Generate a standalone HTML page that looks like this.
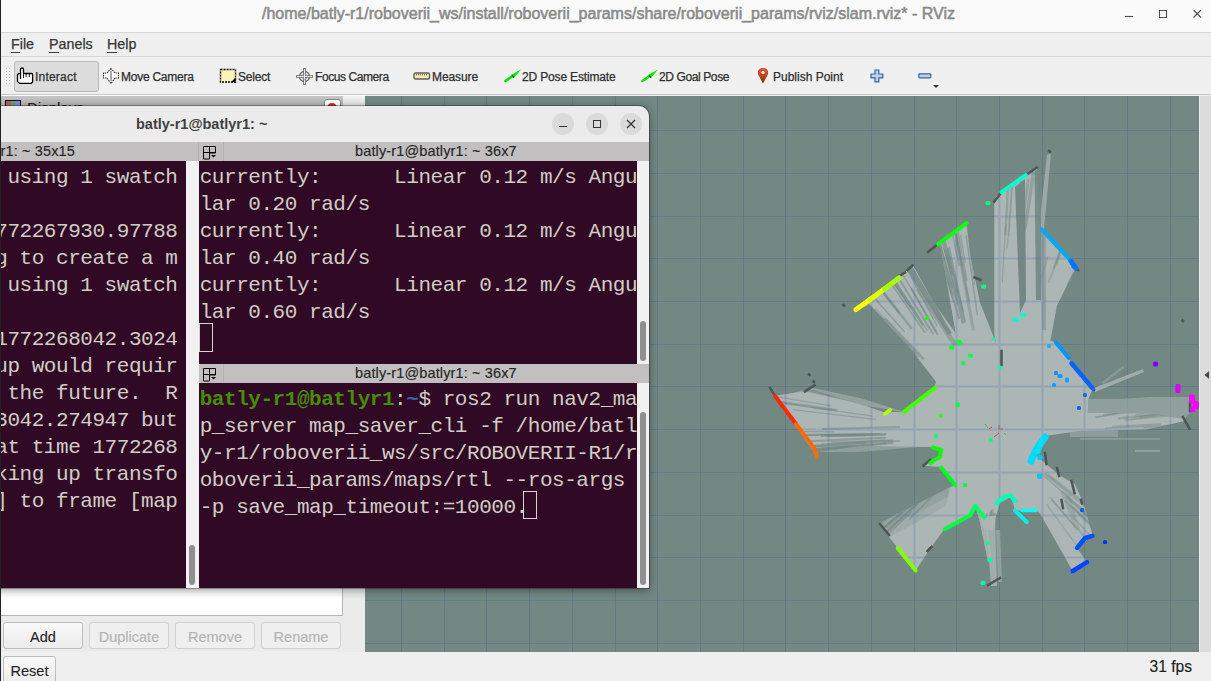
<!DOCTYPE html>
<html><head><meta charset="utf-8">
<style>
*{margin:0;padding:0;box-sizing:border-box}
html,body{width:1211px;height:681px;overflow:hidden;background:#efefef;font-family:"Liberation Sans",sans-serif}
.a{position:absolute}
#titlebar{left:0;top:0;width:1211px;height:33px;background:#fafafa;border-bottom:1px solid #d6d6d6}
#title{left:262px;top:5px;font-size:16px;color:#8a8a8a;white-space:nowrap;-webkit-text-stroke:0.55px #8a8a8a}
#menubar{left:0;top:33px;width:1211px;height:24px;background:#efefef;border-bottom:1px solid #d8d8d8}
.menu{top:36px;font-size:14.3px;color:#353535;-webkit-text-stroke:0.25px #353535}
.menu u{text-decoration:none;border-bottom:1px solid #3c3c3c}
#toolbar{left:0;top:57px;width:1211px;height:38px;background:#f0f0f0;border-bottom:1px solid #c9c9c9}
.tb{top:70px;font-size:12px;color:#2e2e2e;white-space:nowrap;-webkit-text-stroke:0.25px #2e2e2e}
#view{left:365px;top:96px;width:834px;height:557px;background:#738883;overflow:hidden}
#rpanel{left:1199px;top:96px;width:12px;height:557px;background:#dcdcdc}
#status{left:0;top:652px;width:1211px;height:29px;background:#efefef}
.btn{height:27px;border:1px solid #bdbdbd;border-radius:3px;background:linear-gradient(#f8f8f8,#ececec);font-size:14.5px;text-align:center;line-height:28px;color:#222;-webkit-text-stroke:0.1px #222}
.btn.dis{color:#b5b5b5;border-color:#d0d0d0;background:#efefef;-webkit-text-stroke:0.2px #b5b5b5}
#term{left:-260px;top:106px;width:909px;height:482px;background:#ebebeb;border-radius:0 10px 0 0;box-shadow:0 0 0 1px rgba(0,0,0,.28),0 2px 10px rgba(0,0,0,.42);overflow:hidden}
.tt{font-family:"Liberation Mono",monospace;font-size:21px;letter-spacing:-0.452px;color:#d0ccc6;white-space:pre;line-height:27px}
.tabbar{background:#c1bfbf;height:19px}
.tabt{font-size:14.5px;letter-spacing:0.13px;color:#262626;white-space:nowrap;-webkit-text-stroke:0.15px #262626}
.pane{background:#300a24}
.sbt{background:#f1f1f1}
.thumb{background:#8f8f8f;border-radius:3px;width:6px}
.g{color:#488c05;font-weight:bold}
.bl{color:#3465a4;font-weight:bold}
</style></head><body>
<div class="a" id="titlebar"></div>
<div class="a" id="title">/home/batly-r1/roboverii_ws/install/roboverii_params/share/roboverii_params/rviz/slam.rviz* - RViz</div>

<svg class="a" style="left:1120px;top:5px" width="90" height="20"><path d="M5 11.5H13" stroke="#505050" stroke-width="1.1"/><path d="M39.5 5.5H46.5V12.5H39.5Z" fill="none" stroke="#505050" stroke-width="1.1"/><path d="M73.5 5L81 12.5M81 5L73.5 12.5" stroke="#505050" stroke-width="1.1"/></svg>
<div class="a" id="menubar"></div>
<div class="a menu" style="left:11px"><u>F</u>ile</div>
<div class="a menu" style="left:49px"><u>P</u>anels</div>
<div class="a menu" style="left:107px"><u>H</u>elp</div>

<div class="a" id="toolbar"></div>
<div class="a" style="left:14px;top:61px;width:85px;height:31px;background:#dcdcdc;border:1px solid #b9b9b9;border-radius:3px"></div>
<div class="a tb" style="left:35px;letter-spacing:0.21px">Interact</div>
<div class="a tb" style="left:121px;letter-spacing:-0.25px">Move Camera</div>
<div class="a tb" style="left:238px;letter-spacing:-0.19px">Select</div>
<div class="a tb" style="left:315px;letter-spacing:-0.42px">Focus Camera</div>
<div class="a tb" style="left:432px;letter-spacing:-0.1px">Measure</div>
<div class="a tb" style="left:522px;letter-spacing:-0.16px">2D Pose Estimate</div>
<div class="a tb" style="left:659px;letter-spacing:-0.39px">2D Goal Pose</div>
<div class="a tb" style="left:773px">Publish Point</div>
<svg class="a" style="left:5px;top:67px" width="6" height="18"><g fill="#c4c4c4"><rect x="1" y="1" width="1" height="1"/><rect x="4" y="1" width="1" height="1"/><rect x="1" y="4" width="1" height="1"/><rect x="4" y="4" width="1" height="1"/><rect x="1" y="7" width="1" height="1"/><rect x="4" y="7" width="1" height="1"/><rect x="1" y="10" width="1" height="1"/><rect x="4" y="10" width="1" height="1"/><rect x="1" y="13" width="1" height="1"/><rect x="4" y="13" width="1" height="1"/><rect x="1" y="16" width="1" height="1"/><rect x="4" y="16" width="1" height="1"/></g></svg>
<svg class="a" style="left:16px;top:67px" width="18" height="18"><path d="M4.5 12V2.6Q4.5 1 6 1Q7.5 1 7.5 2.6V6.5H15.5Q16.6 6.5 16.6 7.6V14.8L15.4 16.4H3.6L1.5 14.4V7.8L2.6 6.6H4.5" fill="#fff" stroke="#000" stroke-width="1.3" stroke-linejoin="round"/><path d="M10.2 6.6V10M13.3 6.6V10M7.5 7V11" stroke="#000" stroke-width="0.9"/></svg>
<svg class="a" style="left:102px;top:67px" width="18" height="18"><path d="M9 1.5L5 6H1.5V11H5L9 16.5L13 11H16.5V6H13Z" fill="#fff" stroke="#333" stroke-width="1.1" stroke-dasharray="1.5 0.8"/><path d="M9 4V14" stroke="#aaa" stroke-width="2"/></svg>
<svg class="a" style="left:219px;top:68px" width="18" height="16"><rect x="1.5" y="1.5" width="15" height="12.5" fill="#fdf5b8" stroke="#000" stroke-width="1.4" stroke-dasharray="2 1"/><path d="M16.5 9.5V14.2H12Z" fill="#000"/></svg>
<svg class="a" style="left:295px;top:67px" width="19" height="19"><circle cx="9.5" cy="9.5" r="5" fill="#fff" stroke="#6a6a6a" stroke-width="1.3"/><path d="M9.5 1V18M1 9.5H18" stroke="#6a6a6a" stroke-width="2.6"/><path d="M9.5 1.8V17.2M1.8 9.5H17.2" stroke="#fff" stroke-width="0.9"/><circle cx="9.5" cy="9.5" r="3" fill="none" stroke="#777" stroke-width="0.8" stroke-dasharray="1 1"/></svg>
<svg class="a" style="left:413px;top:72px" width="18" height="8"><rect x="1" y="1" width="15.5" height="6" rx="1.5" fill="#f5e9ad" stroke="#606060" stroke-width="1.4"/><path d="M3.5 1.5V3.5M5.5 1.5V3.5M7.5 1.5V3.5M9.5 1.5V3.5M11.5 1.5V3.5M13.5 1.5V3.5" stroke="#707050" stroke-width="0.9"/></svg>
<svg class="a" style="left:504px;top:68px" width="18" height="15"><path d="M1.5 13L8.5 8" stroke="#00e000" stroke-width="2.6" stroke-linecap="round"/><path d="M17 1.5L7 7L10 10Z" fill="#00f000"/><path d="M8 7.5L10 9.5" stroke="#006000" stroke-width="1.2"/></svg>
<svg class="a" style="left:641px;top:68px" width="18" height="15"><path d="M1.5 13L8.5 8" stroke="#00e000" stroke-width="2.6" stroke-linecap="round"/><path d="M17 1.5L7 7L10 10Z" fill="#00f000"/><path d="M8 7.5L10 9.5" stroke="#006000" stroke-width="1.2"/></svg>
<svg class="a" style="left:757px;top:67px" width="12" height="17"><defs><linearGradient id="pin" x1="0" y1="0" x2="0" y2="1"><stop offset="0" stop-color="#e54b2c"/><stop offset="0.55" stop-color="#b8461c"/><stop offset="1" stop-color="#5a3208"/></linearGradient></defs><path d="M6 16.5L1.6 8.5Q0.8 7 0.8 5.8Q0.8 1 6 1Q11.2 1 11.2 5.8Q11.2 7 10.4 8.5Z" fill="url(#pin)"/><circle cx="6" cy="5.5" r="1.7" fill="#fff"/></svg>
<svg class="a" style="left:870px;top:69px" width="14" height="14"><path d="M5 1H8.8V5H12.8V8.8H8.8V12.8H5V8.8H1V5H5Z" fill="#bcd0ea" stroke="#3763a8" stroke-width="1.2"/></svg>
<svg class="a" style="left:918px;top:73px" width="14" height="6"><rect x="0.8" y="0.8" width="12" height="4" rx="0.8" fill="#bcd0ea" stroke="#3763a8" stroke-width="1.2"/></svg>
<svg class="a" style="left:932px;top:84px" width="8" height="5"><path d="M1 1H7L4 4Z" fill="#333"/></svg>

<div class="a" id="view"><svg width="834" height="557" style="position:absolute;left:0;top:0">
<defs><clipPath id="oc"><polygon points="629.2,105.7 630.7,100.5 636.6,96.1 660.8,79.2 671.8,71.5 675.0,133.0 676.6,133.4 706.0,165.0 710.7,172.1 691.9,209.7 685.4,244.8 690.7,246.1 703.9,262.0 706.5,267.3 727.7,292.4 723.0,304.0 722.8,317.0 781.0,317.0 820.0,323.0 818.0,325.4 781.0,333.5 715.8,334.7 680.1,340.0 671.0,359.0 681.3,368.2 694.5,379.2 709.9,388.0 718.7,407.9 727.5,438.7 712.1,451.9 722.0,466.2 707.7,475.0 674.6,416.7 671.0,414.5 650.0,414.5 648.0,407.0 645.4,401.0 635.0,407.0 631.3,419.2 613.7,421.5 610.1,409.8 605.4,419.2 579.6,433.3 578.4,434.5 565.5,452.1 550.7,474.4 532.6,452.1 513.8,427.4 585.5,391.0 590.2,388.6 574.9,371.0 558.4,369.8 564.3,366.3 572.5,362.8 577.2,355.7 566.7,351.0 495.0,349.9 453.0,355.3 452.3,361.5 410.0,299.8 448.0,294.0 501.0,310.0 518.0,316.0 540.0,316.0 569.4,291.9 571.0,285.7 546.5,254.0 504.8,208.7 490.5,214.2 494.9,210.9 534.6,181.2 537.9,177.9 547.8,169.0 568.7,206.5 590.7,237.3 581.9,186.7 575.3,149.2 573.1,148.1 601.7,127.2 605.0,158.0 615.0,206.5 631.0,247.0 629.3,239.0"/></clipPath></defs>
<path d="M36.5 0V557 M79.5 0V557 M121.5 0V557 M164.5 0V557 M207.5 0V557 M250.5 0V557 M292.5 0V557 M335.5 0V557 M378.5 0V557 M420.5 0V557 M463.5 0V557 M506.5 0V557 M549.5 0V557 M591.5 0V557 M634.5 0V557 M677.5 0V557 M719.5 0V557 M762.5 0V557 M805.5 0V557 M0 547.5H834 M0 504.5H834 M0 461.5H834 M0 419.5H834 M0 376.5H834 M0 333.5H834 M0 290.5H834 M0 248.5H834 M0 205.5H834 M0 162.5H834 M0 120.5H834 M0 77.5H834 M0 34.5H834" stroke="rgb(60,90,140)" stroke-opacity="0.27" stroke-width="1" fill="none"/>
<polygon points="629.2,105.7 630.7,100.5 636.6,96.1 660.8,79.2 671.8,71.5 675.0,133.0 676.6,133.4 706.0,165.0 710.7,172.1 691.9,209.7 685.4,244.8 690.7,246.1 703.9,262.0 706.5,267.3 727.7,292.4 723.0,304.0 722.8,317.0 781.0,317.0 820.0,323.0 818.0,325.4 781.0,333.5 715.8,334.7 680.1,340.0 671.0,359.0 681.3,368.2 694.5,379.2 709.9,388.0 718.7,407.9 727.5,438.7 712.1,451.9 722.0,466.2 707.7,475.0 674.6,416.7 671.0,414.5 650.0,414.5 648.0,407.0 645.4,401.0 635.0,407.0 631.3,419.2 613.7,421.5 610.1,409.8 605.4,419.2 579.6,433.3 578.4,434.5 565.5,452.1 550.7,474.4 532.6,452.1 513.8,427.4 585.5,391.0 590.2,388.6 574.9,371.0 558.4,369.8 564.3,366.3 572.5,362.8 577.2,355.7 566.7,351.0 495.0,349.9 453.0,355.3 452.3,361.5 410.0,299.8 448.0,294.0 501.0,310.0 518.0,316.0 540.0,316.0 569.4,291.9 571.0,285.7 546.5,254.0 504.8,208.7 490.5,214.2 494.9,210.9 534.6,181.2 537.9,177.9 547.8,169.0 568.7,206.5 590.7,237.3 581.9,186.7 575.3,149.2 573.1,148.1 601.7,127.2 605.0,158.0 615.0,206.5 631.0,247.0 629.3,239.0" fill="#acb6b4"/>
<polygon points="415.0,300.0 448.0,292.0 495.0,302.0 540.0,316.0 501.0,310.0 448.0,296.0" fill="#acb6b4" fill-opacity="0.55"/>
<polygon points="674.0,133.0 682.0,59.0 686.0,57.0 679.0,133.0" fill="#acb6b4" fill-opacity="0.7"/>
<polygon points="721.0,303.0 755.0,303.0 785.0,301.0 825.0,301.0 825.0,316.0 820.0,323.0 781.0,317.0 722.8,317.0" fill="#acb6b4" fill-opacity="0.5"/>
<polygon points="729.0,292.0 778.0,273.0 779.0,276.0 730.0,296.0" fill="#acb6b4" fill-opacity="0.8"/>
<polygon points="737.0,286.0 758.0,270.0 759.0,272.0 738.0,288.0" fill="#acb6b4" fill-opacity="0.4"/>
<polygon points="705.0,334.0 753.0,334.0 753.0,341.0 705.0,341.0" fill="#acb6b4" fill-opacity="0.45"/>
<polygon points="715.0,342.0 795.0,342.0 795.0,344.0 715.0,344.0" fill="#acb6b4" fill-opacity="0.35"/>
<polygon points="770.0,354.0 795.0,354.0 795.0,356.0 770.0,356.0" fill="#acb6b4" fill-opacity="0.5"/>
<polygon points="453.0,356.0 495.0,350.0 565.0,350.0 495.0,356.0" fill="#acb6b4" fill-opacity="0.5"/>
<polygon points="613.7,421.0 621.0,421.0 627.0,466.0 623.0,466.0" fill="#acb6b4" fill-opacity="0.85"/>
<polygon points="621.0,424.0 630.0,420.0 632.0,490.0 626.0,490.0" fill="#acb6b4" fill-opacity="0.8"/>
<polygon points="631.0,434.0 635.0,434.0 637.0,486.0 633.0,486.0" fill="#acb6b4" fill-opacity="0.55"/>
<polygon points="615.0,421.0 631.0,419.0 629.0,434.0 619.0,434.0" fill="#acb6b4" fill-opacity="1.0"/>
<polygon points="585.0,391.0 513.8,427.4 520.0,430.0 583.0,399.0" fill="#acb6b4" fill-opacity="0.3"/>
<g stroke="#738883" clip-path="url(#oc)"><line x1="546.8" y1="232.7" x2="483.7" y2="152.6" stroke-width="2.4" stroke-opacity="0.55"/><line x1="534.4" y1="217.1" x2="508.7" y2="184.4" stroke-width="2.4" stroke-opacity="0.55"/><line x1="546.8" y1="213.3" x2="525.6" y2="181.6" stroke-width="2" stroke-opacity="0.55"/><line x1="534.0" y1="246.3" x2="460.9" y2="176.5" stroke-width="1.2" stroke-opacity="0.55"/><line x1="560.0" y1="236.7" x2="516.2" y2="173.0" stroke-width="1.6" stroke-opacity="0.55"/><line x1="544.9" y1="211.4" x2="525.4" y2="182.2" stroke-width="1.2" stroke-opacity="0.55"/><line x1="550.2" y1="258.4" x2="514.9" y2="223.1" stroke-width="2.4" stroke-opacity="0.55"/><line x1="539.6" y1="236.0" x2="505.7" y2="197.7" stroke-width="1.6" stroke-opacity="0.55"/><line x1="558.2" y1="229.5" x2="510.2" y2="156.5" stroke-width="2.4" stroke-opacity="0.55"/><line x1="562.3" y1="234.3" x2="516.6" y2="163.7" stroke-width="1.2" stroke-opacity="0.55"/><line x1="568.1" y1="238.0" x2="534.8" y2="183.9" stroke-width="2" stroke-opacity="0.55"/><line x1="528.3" y1="250.1" x2="493.3" y2="220.0" stroke-width="1.2" stroke-opacity="0.55"/><line x1="572.2" y1="230.1" x2="517.9" y2="127.9" stroke-width="1.2" stroke-opacity="0.55"/><line x1="518.7" y1="224.5" x2="496.4" y2="201.8" stroke-width="2.4" stroke-opacity="0.55"/><line x1="578.5" y1="226.2" x2="558.2" y2="181.8" stroke-width="1.6" stroke-opacity="0.55"/><line x1="572.8" y1="238.7" x2="546.2" y2="192.1" stroke-width="2" stroke-opacity="0.55"/><line x1="535.6" y1="257.5" x2="450.6" y2="185.2" stroke-width="1.6" stroke-opacity="0.55"/><line x1="558.8" y1="263.3" x2="519.8" y2="222.4" stroke-width="2.4" stroke-opacity="0.55"/><line x1="534.5" y1="243.8" x2="485.1" y2="195.0" stroke-width="1.6" stroke-opacity="0.55"/><line x1="568.3" y1="203.2" x2="544.3" y2="150.1" stroke-width="2.4" stroke-opacity="0.55"/><line x1="538.8" y1="252.8" x2="496.1" y2="213.0" stroke-width="2" stroke-opacity="0.55"/><line x1="554.7" y1="194.4" x2="527.8" y2="142.8" stroke-width="1.2" stroke-opacity="0.55"/><line x1="543.7" y1="250.3" x2="468.4" y2="173.7" stroke-width="1.2" stroke-opacity="0.55"/><line x1="550.0" y1="268.1" x2="483.9" y2="210.5" stroke-width="1.2" stroke-opacity="0.55"/><line x1="570.6" y1="235.4" x2="536.6" y2="176.3" stroke-width="1.2" stroke-opacity="0.55"/><line x1="547.8" y1="264.1" x2="472.8" y2="196.7" stroke-width="1.2" stroke-opacity="0.55"/><line x1="603.9" y1="205.2" x2="589.7" y2="130.9" stroke-width="2.4" stroke-opacity="0.5"/><line x1="612.4" y1="219.3" x2="601.2" y2="139.7" stroke-width="1.6" stroke-opacity="0.5"/><line x1="598.2" y1="216.0" x2="575.0" y2="124.6" stroke-width="1.6" stroke-opacity="0.5"/><line x1="587.2" y1="192.0" x2="567.5" y2="124.0" stroke-width="2.4" stroke-opacity="0.5"/><line x1="609.7" y1="189.0" x2="601.6" y2="126.1" stroke-width="1.2" stroke-opacity="0.5"/><line x1="587.8" y1="199.7" x2="571.7" y2="146.1" stroke-width="2.4" stroke-opacity="0.5"/><line x1="586.9" y1="179.0" x2="570.5" y2="117.2" stroke-width="2" stroke-opacity="0.5"/><line x1="594.3" y1="170.2" x2="578.3" y2="93.4" stroke-width="1.6" stroke-opacity="0.5"/><line x1="590.5" y1="195.8" x2="565.8" y2="105.2" stroke-width="1.2" stroke-opacity="0.5"/><line x1="586.1" y1="172.9" x2="576.3" y2="135.3" stroke-width="1.2" stroke-opacity="0.5"/><line x1="588.6" y1="206.4" x2="571.1" y2="149.8" stroke-width="1.2" stroke-opacity="0.5"/><line x1="592.3" y1="208.1" x2="569.2" y2="126.8" stroke-width="1.6" stroke-opacity="0.5"/><line x1="594.4" y1="223.1" x2="569.5" y2="141.2" stroke-width="2" stroke-opacity="0.5"/><line x1="601.8" y1="184.5" x2="589.5" y2="115.9" stroke-width="1.6" stroke-opacity="0.5"/><line x1="596.8" y1="170.0" x2="586.8" y2="118.3" stroke-width="2" stroke-opacity="0.5"/><line x1="600.3" y1="166.8" x2="595.6" y2="139.2" stroke-width="1.2" stroke-opacity="0.5"/><line x1="643.8" y1="140.1" x2="647.7" y2="88.2" stroke-width="1.2" stroke-opacity="0.45"/><line x1="628.4" y1="151.5" x2="628.2" y2="64.5" stroke-width="1.6" stroke-opacity="0.45"/><line x1="657.2" y1="129.4" x2="663.4" y2="83.2" stroke-width="2.4" stroke-opacity="0.45"/><line x1="661.0" y1="132.9" x2="669.0" y2="81.6" stroke-width="1.2" stroke-opacity="0.45"/><line x1="656.7" y1="151.8" x2="668.2" y2="74.5" stroke-width="2.4" stroke-opacity="0.45"/><line x1="637.3" y1="186.4" x2="640.6" y2="128.5" stroke-width="1.2" stroke-opacity="0.45"/><line x1="651.6" y1="123.6" x2="658.9" y2="54.5" stroke-width="2" stroke-opacity="0.45"/><line x1="640.3" y1="139.5" x2="644.1" y2="72.3" stroke-width="2.4" stroke-opacity="0.45"/><line x1="642.2" y1="152.3" x2="647.4" y2="79.9" stroke-width="1.2" stroke-opacity="0.45"/><line x1="673.8" y1="190.2" x2="683.1" y2="159.7" stroke-width="1.2" stroke-opacity="0.35"/><line x1="688.6" y1="172.9" x2="709.7" y2="114.6" stroke-width="2" stroke-opacity="0.35"/><line x1="702.1" y1="189.4" x2="716.8" y2="159.7" stroke-width="1.6" stroke-opacity="0.35"/><line x1="691.5" y1="168.0" x2="703.1" y2="136.5" stroke-width="2.4" stroke-opacity="0.35"/><line x1="683.5" y1="186.9" x2="700.4" y2="140.6" stroke-width="2" stroke-opacity="0.35"/><line x1="747.2" y1="317.8" x2="833.9" y2="303.7" stroke-width="1.6" stroke-opacity="0.45"/><line x1="746.1" y1="337.7" x2="821.6" y2="338.1" stroke-width="2" stroke-opacity="0.45"/><line x1="730.5" y1="320.8" x2="798.6" y2="310.0" stroke-width="1.2" stroke-opacity="0.45"/><line x1="778.5" y1="331.7" x2="815.5" y2="330.3" stroke-width="1.6" stroke-opacity="0.45"/><line x1="749.1" y1="314.9" x2="840.8" y2="298.1" stroke-width="2.4" stroke-opacity="0.45"/><line x1="753.1" y1="322.5" x2="827.6" y2="313.9" stroke-width="2.4" stroke-opacity="0.45"/><line x1="770.4" y1="318.3" x2="811.0" y2="313.0" stroke-width="1.2" stroke-opacity="0.45"/><line x1="740.1" y1="332.1" x2="804.1" y2="329.3" stroke-width="1.2" stroke-opacity="0.45"/><line x1="747.1" y1="330.8" x2="796.1" y2="328.2" stroke-width="2" stroke-opacity="0.45"/><line x1="730.9" y1="321.4" x2="776.6" y2="314.5" stroke-width="1.2" stroke-opacity="0.45"/><line x1="759.6" y1="323.9" x2="828.2" y2="316.9" stroke-width="2" stroke-opacity="0.45"/><line x1="763.3" y1="340.3" x2="804.6" y2="341.3" stroke-width="2.4" stroke-opacity="0.45"/><line x1="763.6" y1="317.1" x2="833.5" y2="306.8" stroke-width="1.2" stroke-opacity="0.45"/><line x1="738.1" y1="318.7" x2="801.1" y2="308.2" stroke-width="1.6" stroke-opacity="0.45"/><line x1="768.6" y1="321.1" x2="842.8" y2="312.7" stroke-width="1.2" stroke-opacity="0.45"/><line x1="774.5" y1="321.1" x2="818.4" y2="316.3" stroke-width="2.4" stroke-opacity="0.45"/><line x1="701.1" y1="400.4" x2="764.0" y2="455.8" stroke-width="2.4" stroke-opacity="0.4"/><line x1="699.5" y1="404.4" x2="742.3" y2="445.5" stroke-width="2" stroke-opacity="0.4"/><line x1="701.9" y1="401.7" x2="733.7" y2="430.0" stroke-width="1.2" stroke-opacity="0.4"/><line x1="720.2" y1="401.6" x2="779.2" y2="443.4" stroke-width="2" stroke-opacity="0.4"/><line x1="705.6" y1="409.5" x2="737.8" y2="440.0" stroke-width="1.2" stroke-opacity="0.4"/><line x1="679.5" y1="377.5" x2="740.1" y2="426.1" stroke-width="2.4" stroke-opacity="0.4"/><line x1="686.5" y1="403.6" x2="710.4" y2="431.3" stroke-width="1.2" stroke-opacity="0.4"/><line x1="676.0" y1="377.5" x2="741.7" y2="434.0" stroke-width="1.6" stroke-opacity="0.4"/><line x1="716.6" y1="415.3" x2="763.7" y2="457.3" stroke-width="2.4" stroke-opacity="0.4"/><line x1="681.4" y1="408.1" x2="736.8" y2="483.4" stroke-width="1.2" stroke-opacity="0.4"/><line x1="685.0" y1="401.3" x2="732.0" y2="455.3" stroke-width="1.6" stroke-opacity="0.4"/><line x1="708.3" y1="411.1" x2="748.1" y2="448.3" stroke-width="2" stroke-opacity="0.4"/><line x1="707.7" y1="420.7" x2="751.6" y2="467.5" stroke-width="1.6" stroke-opacity="0.4"/><line x1="683.0" y1="378.6" x2="748.8" y2="429.3" stroke-width="2" stroke-opacity="0.4"/><line x1="627.7" y1="420.5" x2="626.8" y2="481.1" stroke-width="1.2" stroke-opacity="0.55"/><line x1="627.3" y1="413.2" x2="625.3" y2="505.1" stroke-width="2.4" stroke-opacity="0.55"/><line x1="627.9" y1="454.0" x2="627.7" y2="475.6" stroke-width="1.2" stroke-opacity="0.55"/><line x1="625.9" y1="414.7" x2="623.3" y2="479.5" stroke-width="2.4" stroke-opacity="0.55"/><line x1="619.4" y1="445.6" x2="616.2" y2="482.2" stroke-width="1.6" stroke-opacity="0.55"/><line x1="629.5" y1="417.4" x2="629.8" y2="474.3" stroke-width="2.4" stroke-opacity="0.55"/><line x1="628.6" y1="416.6" x2="628.3" y2="473.2" stroke-width="1.2" stroke-opacity="0.55"/><line x1="621.8" y1="417.2" x2="615.0" y2="493.6" stroke-width="1.2" stroke-opacity="0.55"/><line x1="568.2" y1="399.2" x2="544.5" y2="423.4" stroke-width="2" stroke-opacity="0.5"/><line x1="558.5" y1="402.2" x2="512.1" y2="445.2" stroke-width="1.2" stroke-opacity="0.5"/><line x1="548.9" y1="406.7" x2="498.6" y2="450.4" stroke-width="2" stroke-opacity="0.5"/><line x1="542.1" y1="406.9" x2="493.0" y2="446.4" stroke-width="1.2" stroke-opacity="0.5"/><line x1="556.0" y1="403.3" x2="514.2" y2="441.3" stroke-width="1.6" stroke-opacity="0.5"/><line x1="538.8" y1="414.4" x2="506.8" y2="441.8" stroke-width="1.6" stroke-opacity="0.5"/><line x1="539.3" y1="414.2" x2="504.6" y2="444.0" stroke-width="1.6" stroke-opacity="0.5"/><line x1="547.0" y1="415.3" x2="504.8" y2="455.5" stroke-width="1.6" stroke-opacity="0.5"/><line x1="559.9" y1="401.0" x2="500.2" y2="456.5" stroke-width="1.6" stroke-opacity="0.5"/><line x1="520.4" y1="339.0" x2="461.5" y2="340.1" stroke-width="1.6" stroke-opacity="0.55"/><line x1="528.3" y1="346.8" x2="440.2" y2="355.4" stroke-width="2.4" stroke-opacity="0.55"/><line x1="504.5" y1="338.5" x2="400.0" y2="339.7" stroke-width="1.6" stroke-opacity="0.55"/><line x1="490.6" y1="349.3" x2="398.5" y2="357.6" stroke-width="1.2" stroke-opacity="0.55"/><line x1="486.8" y1="349.7" x2="390.7" y2="358.2" stroke-width="2" stroke-opacity="0.55"/><line x1="499.2" y1="349.9" x2="402.7" y2="359.6" stroke-width="1.6" stroke-opacity="0.55"/><line x1="500.3" y1="339.0" x2="456.0" y2="339.7" stroke-width="2.4" stroke-opacity="0.55"/><line x1="521.6" y1="347.3" x2="453.5" y2="353.8" stroke-width="1.6" stroke-opacity="0.55"/><line x1="469.1" y1="335.8" x2="433.8" y2="335.5" stroke-width="1.2" stroke-opacity="0.55"/><line x1="487.0" y1="350.8" x2="445.2" y2="354.9" stroke-width="1.2" stroke-opacity="0.55"/><line x1="501.7" y1="346.4" x2="420.6" y2="352.3" stroke-width="2.4" stroke-opacity="0.55"/><line x1="508.3" y1="347.6" x2="413.5" y2="356.0" stroke-width="1.2" stroke-opacity="0.55"/><line x1="521.3" y1="338.1" x2="431.2" y2="339.0" stroke-width="2" stroke-opacity="0.55"/><line x1="520.6" y1="343.9" x2="456.0" y2="348.1" stroke-width="1.2" stroke-opacity="0.55"/><line x1="528.3" y1="344.5" x2="398.9" y2="354.0" stroke-width="2.4" stroke-opacity="0.55"/><line x1="520.7" y1="341.7" x2="419.9" y2="346.2" stroke-width="2" stroke-opacity="0.55"/><line x1="518.9" y1="311.1" x2="397.7" y2="282.6" stroke-width="1.6" stroke-opacity="0.45"/><line x1="508.9" y1="308.5" x2="398.4" y2="282.3" stroke-width="2" stroke-opacity="0.45"/><line x1="484.2" y1="303.8" x2="426.0" y2="290.5" stroke-width="1.6" stroke-opacity="0.45"/><line x1="510.9" y1="323.3" x2="427.7" y2="313.6" stroke-width="1.2" stroke-opacity="0.45"/><line x1="469.5" y1="297.3" x2="396.2" y2="279.0" stroke-width="1.2" stroke-opacity="0.45"/><line x1="469.5" y1="314.3" x2="404.4" y2="305.1" stroke-width="2" stroke-opacity="0.45"/><line x1="506.8" y1="319.9" x2="448.7" y2="311.8" stroke-width="1.2" stroke-opacity="0.45"/><line x1="466.3" y1="309.8" x2="405.7" y2="299.6" stroke-width="1.2" stroke-opacity="0.45"/><line x1="469.5" y1="300.6" x2="440.5" y2="294.0" stroke-width="1.2" stroke-opacity="0.45"/><line x1="518.8" y1="312.3" x2="438.5" y2="294.3" stroke-width="1.2" stroke-opacity="0.45"/><line x1="492.2" y1="305.8" x2="454.5" y2="297.2" stroke-width="2" stroke-opacity="0.45"/><line x1="472.2" y1="314.2" x2="411.5" y2="305.4" stroke-width="2.4" stroke-opacity="0.45"/><line x1="498.7" y1="302.8" x2="392.4" y2="274.9" stroke-width="2.4" stroke-opacity="0.45"/><line x1="531.4" y1="313.9" x2="426.1" y2="289.1" stroke-width="1.2" stroke-opacity="0.45"/></g>
<polygon points="585.0,391.0 513.8,427.4 519.0,434.0 583.0,401.0" fill="#738883" fill-opacity="0.4"/>
<polygon points="583.0,401.0 519.0,434.0 525.0,441.0 581.0,410.0" fill="#738883" fill-opacity="0.2"/>
<polygon points="542.0,174.0 547.0,170.0 587.0,237.0 583.0,239.0" fill="#738883" fill-opacity="0.8"/>
<polygon points="551.0,194.0 555.0,192.0 593.0,249.0 588.0,250.0" fill="#738883" fill-opacity="0.5"/>
<polygon points="507.0,214.0 511.0,212.0 555.0,261.0 550.0,262.0" fill="#738883" fill-opacity="0.35"/>
<polygon points="579.0,154.0 585.0,151.0 601.0,226.0 597.0,228.0" fill="#738883" fill-opacity="0.6"/>
<polygon points="590.0,144.0 593.0,142.0 610.0,234.0 607.0,235.0" fill="#738883" fill-opacity="0.4"/>
<polygon points="650.0,91.0 660.0,83.0 661.0,204.0 655.0,217.0" fill="#738883" fill-opacity="1.0"/>
<polygon points="669.5,75.0 676.0,72.0 676.0,204.0 671.0,204.0" fill="#738883" fill-opacity="0.9"/>
<polygon points="676.0,135.0 681.0,140.0 681.0,234.0 677.0,234.0" fill="#738883" fill-opacity="0.45"/>
<polygon points="457.0,332.0 535.0,330.0 535.0,332.0 457.0,334.0" fill="#738883" fill-opacity="0.5"/>
<polygon points="459.0,338.0 515.0,337.0 515.0,339.0 461.0,340.0" fill="#738883" fill-opacity="0.5"/>
<polygon points="465.0,345.0 535.0,344.0 535.0,346.0 467.0,347.0" fill="#738883" fill-opacity="0.4"/>
<polygon points="695.0,394.0 705.0,399.0 715.0,434.0 710.0,434.0" fill="#738883" fill-opacity="0.3"/>
<path d="M36.5 0V557 M79.5 0V557 M121.5 0V557 M164.5 0V557 M207.5 0V557 M250.5 0V557 M292.5 0V557 M335.5 0V557 M378.5 0V557 M420.5 0V557 M463.5 0V557 M506.5 0V557 M549.5 0V557 M591.5 0V557 M634.5 0V557 M677.5 0V557 M719.5 0V557 M762.5 0V557 M805.5 0V557 M0 547.5H834 M0 504.5H834 M0 461.5H834 M0 419.5H834 M0 376.5H834 M0 333.5H834 M0 290.5H834 M0 248.5H834 M0 205.5H834 M0 162.5H834 M0 120.5H834 M0 77.5H834 M0 34.5H834" stroke="rgb(70,100,165)" stroke-opacity="0.22" stroke-width="2" fill="none" clip-path="url(#oc)"/>
<path d="M536.0,179.0 L540.0,176.5 M542.5,174.0 L547.5,169.5 M563.0,156.0 L573.1,148.1 M629.2,105.7 L636.6,96.1 M660.8,79.2 L671.8,71.5 M684.0,55.0 L685.0,56.0 M706.0,165.0 L713.0,174.0 M405.0,292.0 L410.0,299.8 M440.0,295.4 L449.6,289.2 M444.0,278.5 L444.5,279.0 M448.5,285.5 L449.0,286.0 M558.4,369.8 L565.0,364.0 M515.0,428.0 L524.0,439.0 M562.5,455.0 L566.5,451.0 M680.0,357.0 L681.5,368.0 M692.0,372.0 L694.0,380.0 M706.5,385.0 L709.5,397.0 M696.5,404.0 L698.0,412.0 M716.0,404.0 L717.0,407.5 M725.0,291.0 L729.0,294.0 M825.0,306.0 L825.0,315.0 M818.0,321.0 L824.5,332.7 M636.5,255.0 L636.5,269.0 M609.6,181.5 L615.5,184.0 M623.0,489.0 L635.0,482.0 M478.5,209.0 L479.0,209.5 M817.5,224.5 L818.0,225.0" stroke="#4d5655" stroke-width="2.5" fill="none" stroke-linecap="square"/>
<path d="M410.0,300.0 L431.0,328.0" stroke="#ff2a00" stroke-width="4" fill="none" stroke-linecap="round" stroke-linejoin="round"/>
<path d="M431.0,328.0 L449.0,352.0 L452.0,361.0" stroke="#ff6a00" stroke-width="4" fill="none" stroke-linecap="round" stroke-linejoin="round"/>
<path d="M491.0,213.5 L505.0,203.5" stroke="#ffff00" stroke-width="5" fill="none" stroke-linecap="round" stroke-linejoin="round"/>
<path d="M505.0,203.5 L520.0,192.5" stroke="#e0ff00" stroke-width="5" fill="none" stroke-linecap="round" stroke-linejoin="round"/>
<path d="M520.0,192.5 L534.0,182.0" stroke="#a8ff00" stroke-width="5" fill="none" stroke-linecap="round" stroke-linejoin="round"/>
<path d="M573.1,148.1 L601.7,127.2" stroke="#10ff10" stroke-width="4" fill="none" stroke-linecap="round" stroke-linejoin="round"/>
<path d="M636.6,96.1 L660.8,79.2" stroke="#00ffd0" stroke-width="4" fill="none" stroke-linecap="round" stroke-linejoin="round"/>
<path d="M676.6,133.4 L706.0,165.0" stroke="#00a8ff" stroke-width="4" fill="none" stroke-linecap="round" stroke-linejoin="round"/>
<path d="M706.0,165.0 L710.7,172.1" stroke="#0078ff" stroke-width="5" fill="none" stroke-linecap="round" stroke-linejoin="round"/>
<path d="M690.7,246.1 L703.9,262.0" stroke="#0096ff" stroke-width="4" fill="none" stroke-linecap="round" stroke-linejoin="round"/>
<path d="M706.5,267.3 L727.7,292.4" stroke="#0064ff" stroke-width="4.5" fill="none" stroke-linecap="round" stroke-linejoin="round"/>
<path d="M680.1,341.0 L671.0,354.0 L666.0,365.0" stroke="#00d8ff" stroke-width="7" fill="none" stroke-linecap="round" stroke-linejoin="round"/>
<path d="M677.0,344.0 L673.0,356.0" stroke="#00e0ff" stroke-width="5" fill="none" stroke-linecap="round" stroke-linejoin="round"/>
<path d="M727.5,439.8 L720.0,442.0 L712.1,451.9" stroke="#0050ff" stroke-width="4.5" fill="none" stroke-linecap="round" stroke-linejoin="round"/>
<path d="M722.0,466.2 L707.7,475.0" stroke="#0044ff" stroke-width="4.5" fill="none" stroke-linecap="round" stroke-linejoin="round"/>
<path d="M631.3,407.4 L639.0,401.0 L645.4,399.2 L650.1,405.1" stroke="#00ffb8" stroke-width="4" fill="none" stroke-linecap="round" stroke-linejoin="round"/>
<path d="M650.0,414.5 L661.8,426.2" stroke="#00f0e8" stroke-width="4" fill="none" stroke-linecap="round" stroke-linejoin="round"/>
<path d="M657.0,414.5 L671.0,414.5" stroke="#00ffff" stroke-width="3.5" fill="none" stroke-linecap="round" stroke-linejoin="round"/>
<path d="M605.4,419.2 L610.1,409.8 L619.5,421.5" stroke="#00ff60" stroke-width="4" fill="none" stroke-linecap="round" stroke-linejoin="round"/>
<path d="M579.6,433.3 L593.0,426.0 L605.4,419.2" stroke="#00ff40" stroke-width="4" fill="none" stroke-linecap="round" stroke-linejoin="round"/>
<path d="M532.6,452.1 L550.7,474.4" stroke="#80ff00" stroke-width="4" fill="none" stroke-linecap="round" stroke-linejoin="round"/>
<path d="M567.9,351.5 L576.1,353.8 L575.0,360.9 L569.1,364.4 L565.5,366.8" stroke="#10ff00" stroke-width="4" fill="none" stroke-linecap="round" stroke-linejoin="round"/>
<path d="M576.1,371.5 L590.2,389.1" stroke="#00ff20" stroke-width="4" fill="none" stroke-linecap="round" stroke-linejoin="round"/>
<path d="M538.5,316.2 L570.2,291.6" stroke="#44ff00" stroke-width="4" fill="none" stroke-linecap="round" stroke-linejoin="round"/>
<path d="M520.0,318.0 L525.0,314.0" stroke="#b0ff00" stroke-width="4" fill="none" stroke-linecap="round" stroke-linejoin="round"/>
<rect x="620.5" y="105.0" width="5" height="4" rx="1.5" fill="#00ff80"/>
<rect x="706.5" y="167.5" width="5" height="5" rx="1.5" fill="#0070ff"/>
<rect x="682.0" y="248.0" width="4" height="4" rx="1.5" fill="#20b0ff"/>
<rect x="689.0" y="275.0" width="4" height="4" rx="1.5" fill="#1090ff"/>
<rect x="687.0" y="287.0" width="4" height="4" rx="1.5" fill="#10a0ff"/>
<rect x="700.0" y="281.5" width="4" height="5" rx="1.5" fill="#10a0ff"/>
<rect x="692.5" y="278.0" width="5" height="4" rx="1.5" fill="#10a0ff"/>
<rect x="718.0" y="297.0" width="4" height="4" rx="1.5" fill="#0070ff"/>
<rect x="712.0" y="310.0" width="4" height="4" rx="1.5" fill="#0068ff"/>
<rect x="788.0" y="265.5" width="5" height="5" rx="1.5" fill="#8000ff"/>
<rect x="810.5" y="288.0" width="5" height="9" rx="1.5" fill="#d800ff"/>
<rect x="824.0" y="298.5" width="6" height="9" rx="1.5" fill="#ff00ff"/>
<rect x="828.0" y="305.0" width="6" height="8" rx="1.5" fill="#ff00ff"/>
<rect x="825.5" y="310.0" width="5" height="6" rx="1.5" fill="#ff00ff"/>
<rect x="738.0" y="444.0" width="4" height="4" rx="1.5" fill="#0030ff"/>
<rect x="715.0" y="412.0" width="4" height="4" rx="1.5" fill="#0060ff"/>
<rect x="590.6" y="306.2" width="4" height="5" rx="1.5" fill="#00ff40"/>
<rect x="573.4" y="317.8" width="4" height="4" rx="1.5" fill="#20ff00"/>
<rect x="584.2" y="249.6" width="5" height="4" rx="1.5" fill="#00ff30"/>
<rect x="591.2" y="243.7" width="5" height="4" rx="1.5" fill="#00ff40"/>
<rect x="603.0" y="257.8" width="5" height="4" rx="1.5" fill="#00ff60"/>
<rect x="596.4" y="264.9" width="4" height="4" rx="1.5" fill="#00ff50"/>
<rect x="626.5" y="241.4" width="4" height="3" rx="1.5" fill="#00ffa0"/>
<rect x="632.9" y="269.6" width="4" height="4" rx="1.5" fill="#00ffa0"/>
<rect x="560.0" y="220.0" width="4" height="4" rx="1.5" fill="#20ff00"/>
<rect x="592.5" y="245.0" width="5" height="4" rx="1.5" fill="#00ff40"/>
<rect x="623.5" y="342.0" width="4" height="4" rx="1.5" fill="#00ff80"/>
<rect x="672.1" y="377.8" width="5" height="5" rx="1.5" fill="#00c0ff"/>
<rect x="672.5" y="359.1" width="5" height="5" rx="1.5" fill="#00c8ff"/>
<rect x="616.1" y="188.5" width="5" height="4" rx="1.5" fill="#00ff90"/>
<rect x="647.8" y="221.8" width="6" height="4" rx="1.5" fill="#00ffd8"/>
<rect x="654.8" y="217.1" width="6" height="4" rx="1.5" fill="#00ffd8"/>
<rect x="621.0" y="445.0" width="4" height="4" rx="1.5" fill="#00ff90"/>
<rect x="622.5" y="462.0" width="5" height="4" rx="1.5" fill="#00ffa0"/>
<rect x="615.5" y="485.0" width="5" height="4" rx="1.5" fill="#00ffa0"/>
<rect x="598.0" y="387.0" width="4" height="4" rx="1.5" fill="#00ff40"/>
<rect x="569.0" y="338.0" width="4" height="4" rx="1.5" fill="#00ff60"/>
<path d="M624 333l3 -2M634 333h4M629 341l5 -4" stroke="#c05050" stroke-width="1" fill="none"/><path d="M620 328l3 4M639 337l2 2" stroke="#40c040" stroke-width="1" fill="none"/><path d="M634 329v4" stroke="#707070" stroke-width="1"/>
</svg></div><!--/view-->
<div class="a" id="rpanel"></div>
<div class="a" style="left:1199px;top:96px;width:1px;height:556px;background:#ececec"></div>
<div class="a" style="left:1199px;top:652px;width:12px;height:1px;background:#b8b8b8"></div>
<svg class="a" style="left:1203px;top:370px" width="7" height="10"><path d="M6 1V9L1.5 5Z" fill="#444"/></svg>
<svg class="a" style="left:1204px;top:673px" width="7" height="7"><g fill="#bbb"><rect x="4" y="0" width="1" height="1"/><rect x="2" y="2" width="1" height="1"/><rect x="4" y="2" width="1" height="1"/><rect x="0" y="4" width="1" height="1"/><rect x="2" y="4" width="1" height="1"/><rect x="4" y="4" width="1" height="1"/></g></svg>

<div class="a" id="status"></div>
<div class="a" style="left:0;top:96px;width:365px;height:556px;background:#ebebeb"></div>
<div class="a" style="left:1px;top:95px;width:364px;height:1px;background:#fbfbfb"></div>
<div class="a" style="left:1px;top:96px;width:342px;height:10px;background:linear-gradient(#c6c6c6,#b2b2b2)"></div>
<div class="a" style="left:343px;top:96px;width:22px;height:10px;background:linear-gradient(#f2f2f2,#e2e2e2)"></div>
<div class="a" style="left:5px;top:100px;width:16px;height:8px;border:1.5px solid #111;background:linear-gradient(90deg,#b86070 33%,#60a860 33%,#60a860 66%,#8a88e0 66%)"></div>
<div class="a" style="left:27px;top:98.5px;font-size:15px;color:#222;-webkit-text-stroke:0.2px #222">Displays</div>
<div class="a" style="left:324px;top:99px;width:17px;height:10px;border-radius:3px;background:#fff;border:1px solid #888"></div>
<div class="a" style="left:327px;top:103px;width:10px;height:10px;border-radius:50%;background:#d42a2a"></div>
<div class="a" style="left:1px;top:588px;width:342px;height:28px;background:#fff;border-bottom:1px solid #b5b5b5;border-right:1px solid #b5b5b5"></div>
<div class="a btn" style="left:3px;top:622px;width:80px">Add</div>
<div class="a btn dis" style="left:89px;top:622px;width:80px">Duplicate</div>
<div class="a btn dis" style="left:175px;top:622px;width:80px">Remove</div>
<div class="a btn dis" style="left:261px;top:622px;width:80px">Rename</div>
<div class="a btn" style="left:3px;top:656px;width:53px;height:30px;line-height:29px">Reset</div>
<div class="a" style="left:1149.5px;top:657.5px;font-size:15.6px;color:#222;-webkit-text-stroke:0.15px #222">31 fps</div>

<div class="a" id="term"></div>
<div class="a" style="left:0;top:142px;width:649px;height:19px;background:#c1bfbf"></div>
<div class="a" style="left:198px;top:142px;width:1px;height:19px;background:#b3b1b1"></div>
<div class="a" style="left:223px;top:142px;width:1px;height:19px;background:#b3b1b1"></div>
<div class="a tabt" style="left:-125px;top:143px;width:200px;text-align:right">batly-r1@batlyr1: ~ 35x15</div>
<div class="a tabt" style="left:355px;top:143px">batly-r1@batlyr1: ~ 36x7</div>
<div class="a pane" style="left:0;top:161px;width:186px;height:427px"></div>
<div class="a sbt" style="left:186px;top:161px;width:13px;height:427px"></div>
<div class="a thumb" style="left:189px;top:545px;height:40px"></div>
<div class="a pane" style="left:199px;top:161px;width:438px;height:203px"></div>
<div class="a sbt" style="left:637px;top:161px;width:12px;height:203px"></div>
<div class="a thumb" style="left:640px;top:321px;height:40px"></div>
<div class="a" style="left:199px;top:364px;width:450px;height:19px;background:#c1bfbf"></div>
<div class="a" style="left:223px;top:364px;width:1px;height:19px;background:#b3b1b1"></div>
<div class="a tabt" style="left:355px;top:365px">batly-r1@batlyr1: ~ 36x7</div>
<div class="a pane" style="left:199px;top:383px;width:438px;height:205px"></div>
<div class="a sbt" style="left:637px;top:383px;width:12px;height:205px"></div>
<div class="a thumb" style="left:640px;top:412px;height:173px"></div>
<div class="a" style="left:136px;top:116px;font-size:14.5px;font-weight:bold;color:#3f3f3f">batly-r1@batlyr1: ~</div>
<div class="a" style="left:552px;top:113px;width:22px;height:22px;border-radius:50%;background:#dadada"></div>
<div class="a" style="left:586px;top:113px;width:22px;height:22px;border-radius:50%;background:#dadada"></div>
<div class="a" style="left:620px;top:113px;width:22px;height:22px;border-radius:50%;background:#dadada"></div>
<div class="a" style="left:559px;top:126px;width:8px;height:1px;background:#333"></div>
<div class="a" style="left:593px;top:120px;width:8px;height:8px;border:1px solid #333"></div>
<svg class="a" style="left:626px;top:119px" width="10" height="10"><path d="M1 1L9 9M9 1L1 9" stroke="#333" stroke-width="1.2"/></svg>
<svg class="a" style="left:203px;top:146px" width="14" height="14"><path d="M0.5 0.5h12v6.5h-6v6h-6z M6.5 0.5v12 M0.5 6.5h12" fill="none" stroke="#000" stroke-width="1"/><path d="M8 9h5l-2.5 2.5z" fill="#000"/></svg>
<svg class="a" style="left:203px;top:368px" width="14" height="14"><path d="M0.5 0.5h12v6.5h-6v6h-6z M6.5 0.5v12 M0.5 6.5h12" fill="none" stroke="#000" stroke-width="1"/><path d="M8 9h5l-2.5 2.5z" fill="#000"/></svg>
<div class="a" style="left:199px;top:323px;width:14px;height:29px;border:1px solid #d6d2cc"></div>
<div class="a" style="left:523px;top:491px;width:14px;height:28px;border:1px solid #d6d2cc"></div>
<div class="a tt" style="left:-4.75px;top:163.9px"> using 1 swatch</div>
<div class="a tt" style="left:-4.75px;top:217.9px">772267930.97788</div>
<div class="a tt" style="left:-4.75px;top:244.9px">g to create a m</div>
<div class="a tt" style="left:-4.75px;top:271.9px"> using 1 swatch</div>
<div class="a tt" style="left:-4.75px;top:325.9px">1772268042.3024</div>
<div class="a tt" style="left:-4.75px;top:352.9px">up would requir</div>
<div class="a tt" style="left:-4.75px;top:379.9px"> the future.  R</div>
<div class="a tt" style="left:-4.75px;top:406.9px">3042.274947 but</div>
<div class="a tt" style="left:-4.75px;top:433.9px">at time 1772268</div>
<div class="a tt" style="left:-4.75px;top:460.9px">king up transfo</div>
<div class="a tt" style="left:-4.75px;top:487.9px">] to frame [map</div>
<div class="a tt" style="left:199.7px;top:163.9px">currently:      Linear 0.12 m/s Angu</div>
<div class="a tt" style="left:199.7px;top:190.9px">lar 0.20 rad/s</div>
<div class="a tt" style="left:199.7px;top:217.9px">currently:      Linear 0.12 m/s Angu</div>
<div class="a tt" style="left:199.7px;top:244.9px">lar 0.40 rad/s</div>
<div class="a tt" style="left:199.7px;top:271.9px">currently:      Linear 0.12 m/s Angu</div>
<div class="a tt" style="left:199.7px;top:298.9px">lar 0.60 rad/s</div>
<div class="a tt" style="left:199.7px;top:385.9px"><span class="g">batly-r1@batlyr1</span>:<span class="bl">~</span>$ ros2 run nav2_ma</div>
<div class="a tt" style="left:199.7px;top:412.9px">p_server map_saver_cli -f /home/batl</div>
<div class="a tt" style="left:199.7px;top:439.9px">y-r1/roboverii_ws/src/ROBOVERII-R1/r</div>
<div class="a tt" style="left:199.7px;top:466.9px">oboverii_params/maps/rtl --ros-args</div>
<div class="a tt" style="left:199.7px;top:493.9px">-p save_map_timeout:=10000.</div>
<div class="a" style="left:0;top:0;width:1px;height:681px;background:#222"></div>
</body></html>
